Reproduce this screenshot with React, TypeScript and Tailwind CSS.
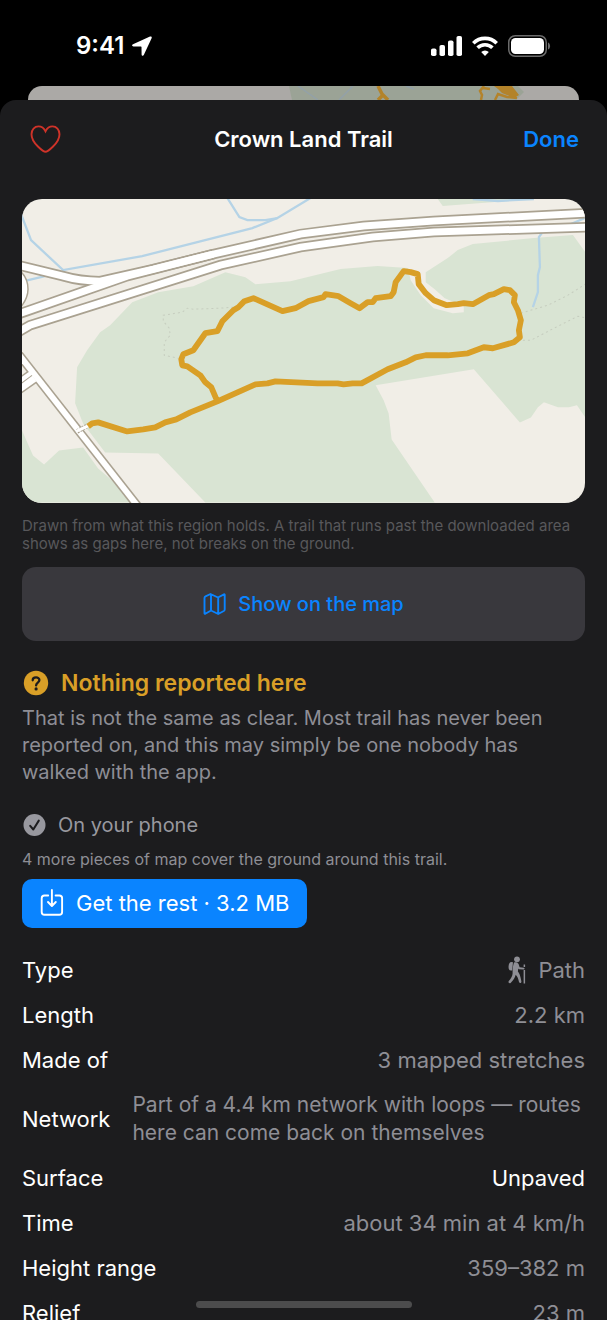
import type { ReactNode } from 'react'

const DETAILS: { label: string; value: string; strong?: boolean; hiker?: boolean; long?: boolean }[] = [
  { label: 'Type', value: 'Path', hiker: true },
  { label: 'Length', value: '2.2 km' },
  { label: 'Made of', value: '3 mapped stretches' },
  { label: 'Network', value: 'Part of a 4.4 km network with loops — routes here can come back on themselves', long: true },
  { label: 'Surface', value: 'Unpaved', strong: true },
  { label: 'Time', value: 'about 34 min at 4 km/h' },
  { label: 'Height range', value: '359–382 m' },
  { label: 'Relief', value: '23 m' },
]

const TRAIL =
  'M88 426 L92 423 L98 422 L127 431 L143 429 L155 427 L165 422 L176 419 L190 412 L217 401 L255 384 L267 383 L275 381 L317 383 L337 383 L343 384 L352 383 L361 383 L387 369 L405 362 L415 357 L425 355 L447 355 L467 353 L483 347 L492 348 L513 342 L519 337 L518 330 L520 320 L517 310 L513 302 L514 295 L509 290 L503 289 L493 294 L488 295 L472 304 L463 303 L457 304 L446 305 L433 300 L425 293 L418 284 L417 274 L410 272 L403 271 L395 282 L393 292 L390 296 L375 298 L372 302 L367 302 L359 308 L350 303 L338 296 L325 294 L323 297 L308 301 L295 308 L282 311 L253 298 L244 301 L238 307 L233 310 L222 321 L217 331 L205 333 L193 350 L183 354 L181 359 L182 365 L187 366 L200 375 L205 382 L211 387 L217 401'

const MOTORWAYS = [
  'M18 265 L63 276 Q80 281 100 281 L153 269 L213 254',
  'M18 314 L127 276 L213 254 L300 234 L363 226 L433 221 L588 213',
  'M18 332 L30 325 L220 265 L300 247 L372 237 L433 232 L588 227',
]

function TrailMap() {
  return (
    <svg viewBox="22 199 562 303" role="img" aria-label="Map of Crown Land Trail" className="block h-auto w-full rounded-[20px] bg-[#f1eee7]">
      {/* woodland */}
      <g fill="#d9e4d3">
        <path d="M87 350 L100 332 L110 325 L132 302 L158 292 L193 286 L225 272 L245 277 L255 284 L290 281 L340 269 L377 266 L407 268 L425 272 L447 258 L457 250 L472 244 L533 238 L572 235 L585 253 L585 418 L576 405 L568 407 L557 407 L543 402 L537 407 L530 417 L519 422 L473 369 L375 385 L383 400 L388 413 L391 439 L434 502 L205 502 L158 453 L105 452 L83 423 L75 403 L77 367 Z" />
        <path d="M22 430 L33 455 L44 464 L59 450 L83 447 L98 468 L112 480 L132 502 L22 502 Z" />
        <path d="M437 199 L442 206 L507 201 L533 199 Z" />
      </g>
      <path d="M407 266 L425 270 L425 282 L434 289 L444 298 L463 306 L463 312 L452 313 L433 308 L420 295 L410 280 Z" fill="#f1eee7" />

      {/* streams */}
      <g fill="none" stroke="#b5d3e6" strokeWidth="2.300">
        <path d="M21 214 L31 240 L63 270 L142 256 L252 228 L277 218 L310 198" />
        <path d="M227 198 L239 217 L247 220 L265 220 L277 218" />
        <path d="M24 281 L45 276" />
        <path d="M472 199 L497 201 L533 199" />
        <path d="M586 217 L570 224" />
        <path d="M541 233 L538 237 L539 267 L537 275 L537 292 L532 307" />
      </g>

      {/* footways */}
      <g fill="none" stroke="#c6cdbf" strokeWidth="1" strokeDasharray="2 3">
        <path d="M233 307 L220 308 L193 309 L187 308 L182 312 L163 315 L163 321 L169 328 L170 335 L164 342 L164 355 L178 358" />
        <path d="M520 313 L547 305 L567 295 L586 283" />
        <path d="M522 340 L530 340 L553 328 L577 316 L586 318" />
      </g>

      {/* roads: casing first, then the white fill */}
      <g fill="none" stroke="#aaa291">
        <path d="M16 268 Q28 275 28 289 Q28 298 20 308" fill="#ffffff" strokeWidth="1.500" />
        <path d="M16 388 L33 376" strokeWidth="15" />
        {MOTORWAYS.map((d) => <path key={d} d={d} strokeWidth="10.500" />)}
        <path d="M10 343 L141 510" strokeWidth="9" />
      </g>
      <g fill="none" stroke="#ffffff">
        <path d="M16 388 L33 376" strokeWidth="12" />
        {MOTORWAYS.map((d) => <path key={d} d={d} strokeWidth="7" />)}
        <path d="M10 343 L141 510" strokeWidth="5.800" />
      </g>
      <path d="M20 384 L32 375" stroke="#aaa291" strokeWidth="1" />
      <path d="M77 431 L88 425" stroke="#aaa291" strokeWidth="4.500" strokeDasharray="2 1" />
      <path d="M76 431 L89 425" stroke="#ffffff" strokeWidth="3" />

      <path d={TRAIL} fill="none" stroke="#d99f27" strokeWidth="5.800" strokeLinejoin="round" />
    </svg>
  )
}

function StatusBar() {
  return (
    <header className="flex h-[86px] items-center justify-between pl-[76px] pr-[56px] pt-[5px]">
      <div className="flex items-center gap-2 text-2xl font-semibold">
        <span>9:41</span>
        <svg viewBox="0 0 20 20" className="h-5 w-5" fill="currentColor" aria-hidden="true">
          <path d="M18 0.600 C19.300 0.100 20.100 1 19.600 2.200 L11.900 18.800 C11.300 20.200 9.600 20 9.600 18.500 L9.500 11.100 C9.500 10.700 9.300 10.500 8.900 10.500 L1.500 10.400 C-0.100 10.400 -0.400 8.800 1 8.200 Z" />
        </svg>
      </div>
      <div className="flex items-center gap-[10px]">
        <svg viewBox="0 0 31 20" className="h-5 w-[31px]" fill="currentColor" aria-hidden="true">
          <rect x="0" y="12.500" width="5.500" height="7.500" rx="1.800" />
          <rect x="8.500" y="9" width="5.500" height="11" rx="1.800" />
          <rect x="17" y="4.500" width="5.500" height="15.500" rx="1.800" />
          <rect x="25.500" y="0" width="5.500" height="20" rx="1.800" />
        </svg>
        <svg viewBox="0 0 26 20" className="h-5 w-[26px]" fill="none" stroke="currentColor" strokeWidth="3.600" aria-hidden="true">
          <path d="M1.300 7.200 A16.500 16.500 0 0 1 24.700 7.200" />
          <path d="M5.600 11.800 A10.500 10.500 0 0 1 20.400 11.800" />
          <path d="M13 20 L9.200 16.100 A5.400 5.400 0 0 1 16.800 16.100 Z" fill="currentColor" stroke="none" />
        </svg>
        <svg viewBox="0 0 43 22" className="h-[22px] w-[43px]" aria-hidden="true">
          <rect x="0.750" y="0.750" width="37.500" height="20.500" rx="6.500" fill="none" stroke="#6b6b6b" strokeWidth="1.500" />
          <rect x="3" y="3" width="33" height="16" rx="4.500" fill="currentColor" />
          <path d="M40 7.500 C42.800 8.500 42.800 13.500 40 14.500 Z" fill="#6b6b6b" />
        </svg>
      </div>
    </header>
  )
}

// Edge of the map screen that stays visible behind the sheet
function BackdropEdge() {
  return (
    <div className="mx-7 h-[14px] overflow-hidden rounded-t-[14px] bg-[#aba9a6]">
      <svg viewBox="0 0 551 14" className="block h-[14px] w-full" fill="none" aria-hidden="true">
        <path d="M261 0 L490 0 L496 6 L488 14 L264 14 Z" fill="#9ba396" />
        <path d="M270 0 L290 14 M311 14 L325 0 M378 0 L386 3" stroke="#93a1a8" strokeWidth="1.500" />
        <path d="M350 0 L355 10 M350 14 L355 9 L360 14" stroke="#b3832a" strokeWidth="3.500" />
        <path d="M456 0 L452 5 L454 9 L453 14 M455 2 L462 3" stroke="#b3832a" strokeWidth="2.500" />
        <path d="M466 0 L484 0 L491 9 L486 12 L474 7 L470 3 Z" fill="#b3832a" />
        <path d="M467 14 L470 8 L479 11 L489 12" stroke="#b3832a" strokeWidth="2.500" />
      </svg>
    </div>
  )
}

function SheetHeader() {
  return (
    <div className="grid h-[78px] grid-cols-[1fr_auto_1fr] items-center px-7 text-[22px] font-semibold">
      <button type="button" aria-label="Add to favourites" className="ml-[2px] justify-self-start text-[#cf3329]">
        <svg viewBox="0 0 31 28" className="h-7 w-[31px]" fill="none" stroke="currentColor" strokeWidth="1.900" aria-hidden="true">
          <path d="M15.500 26.800 C14 26.800 1.500 18.500 1.500 9.200 C1.500 4.500 4.600 1.400 8.500 1.400 C11.800 1.400 14 3.300 15.500 6.300 C17 3.300 19.200 1.400 22.500 1.400 C26.400 1.400 29.500 4.500 29.500 9.200 C29.500 18.500 17 26.800 15.500 26.800 Z" />
        </svg>
      </button>
      <h1>Crown Land Trail</h1>
      <button type="button" className="justify-self-end text-[#0a84ff]">Done</button>
    </div>
  )
}

function Hiker() {
  return (
    <svg viewBox="0 0 18 28" className="h-7 w-[18px]" fill="currentColor" aria-hidden="true">
      <circle cx="9" cy="3.300" r="2.900" />
      <path d="M3.500 6 C1.500 6 0.800 8 0.600 10 C0.400 12.500 0.900 14.500 3 14.500 L4.200 14.500 L5 6.300 Z" />
      <path d="M6 6.500 C9 5.500 10.500 7 11 9.300 L11.600 11.200 L15.800 11.700 C17 12 16.800 13.600 15.700 13.500 L10.800 13.200 L10.200 12.500 L9.900 15.500 C11.500 17.500 12.500 20 13.400 25.500 C13.400 27.500 11.500 27.500 11 26 C10.300 22.700 9.500 20.500 7.700 18.800 C7 21.800 5.700 24 2.600 26.900 C1.300 27.800 -0.200 26.500 0.800 25.100 C3 22.300 4.400 20.500 4.600 17.500 C4.500 13.500 4.900 9.500 6 6.500 Z" />
      <path d="M15.600 8.500 h1.500 v2.500 h-1.500 Z M15.600 14 h1.500 v13.500 h-1.500 Z" />
    </svg>
  )
}

function DetailRow({ label, className, children }: { label: string; className: string; children: ReactNode }) {
  return (
    <div className="flex items-center justify-between gap-[22px]">
      <dt className="shrink-0">{label}</dt>
      <dd className={className}>{children}</dd>
    </div>
  )
}

export default function App() {
  return (
    <div className="relative h-screen overflow-hidden bg-black font-[Inter,sans-serif] text-white">
      <StatusBar />
      <BackdropEdge />

      <main className="rounded-t-[16px] bg-[#1c1c1e] pb-10">
        <SheetHeader />

        <div className="px-[22px] pt-[21px]">
          <TrailMap />
          <p className="mt-[14px] text-[15px] leading-[18px] text-[#58585b]">
            Drawn from what this region holds. A trail that runs past the downloaded area shows as gaps here, not breaks on the ground.
          </p>

          <button type="button" className="mt-[14px] flex h-[74px] w-full items-center justify-center gap-3 rounded-[14px] bg-[#39383d] text-xl font-medium text-[#0a84ff]">
            <svg viewBox="0 0 23 22" className="h-[22px] w-[23px]" fill="none" stroke="currentColor" strokeWidth="1.900" strokeLinejoin="round" aria-hidden="true">
              <path d="M1.500 5 C1.500 4 1.700 3.700 2.500 3.300 L7.500 1 L15 4.500 L21 1.300 C21.500 1.100 21.700 1.300 21.700 2 L21.700 16.500 C21.700 17.300 21.500 17.600 20.800 18 L15.200 21 L8 17.500 L2.300 20.800 C1.800 21 1.500 20.800 1.500 20.200 Z M8 1.300 V17.500 M15.200 4.500 V21" />
            </svg>
            Show on the map
          </button>

          <section className="mt-7">
            <h2 className="flex items-center gap-3 text-[23px] font-semibold leading-7 text-[#d99f27]">
              <svg viewBox="0 0 27 26" className="h-[26px] w-[27px]" aria-hidden="true">
                <circle cx="14" cy="13" r="12.200" fill="currentColor" />
                <path d="M10.700 10.300 C10.700 6.500 17.400 6.500 17.400 10.100 C17.400 12.700 14.100 12.500 14.100 15.400" fill="none" stroke="#1c1c1e" strokeWidth="2.300" strokeLinecap="round" />
                <circle cx="14.100" cy="18.900" r="1.600" fill="#1c1c1e" />
              </svg>
              Nothing reported here
            </h2>
            <p className="mt-2 text-xl leading-[27px] text-[#8e8e95]">
              That is not the same as clear. Most trail has never been reported on, and this may simply be one nobody has walked with the app.
            </p>
          </section>

          <section className="mt-[25px]">
            <h2 className="flex items-center gap-3 text-xl leading-7 text-[#98989f]">
              <svg viewBox="0 0 24 24" className="h-6 w-6" aria-hidden="true">
                <circle cx="12.500" cy="12" r="11" fill="currentColor" />
                <path d="M8.200 12.800 L11.300 16.500 L16.800 7.600" fill="none" stroke="#1c1c1e" strokeWidth="2" strokeLinecap="round" strokeLinejoin="round" />
              </svg>
              On your phone
            </h2>
            <p className="mt-2 text-base leading-6 text-[#8e8e95]">4 more pieces of map cover the ground around this trail.</p>
            <button type="button" className="mt-2 flex h-[49px] items-center gap-3 rounded-[10px] bg-[#0a84ff] px-[18px] text-[22px]">
              <svg viewBox="0 0 24 30" className="h-[30px] w-6" fill="none" stroke="currentColor" strokeWidth="1.900" strokeLinecap="round" strokeLinejoin="round" aria-hidden="true">
                <path d="M8.200 7.500 H4.500 C2.700 7.500 1.700 8.500 1.700 10.300 V24 C1.700 25.800 2.700 26.800 4.500 26.800 H19.300 C21.100 26.800 22.100 25.800 22.100 24 V10.300 C22.100 8.500 21.100 7.500 19.300 7.500 H15.600 M11.900 2 V17.500 M8 14 L11.900 18 L15.800 14" />
              </svg>
              Get the rest · 3.2 MB
            </button>
          </section>

          <dl className="mt-7 flex flex-col gap-[17px] text-[22px] leading-7">
            {DETAILS.map((row) => (
              <DetailRow
                key={row.label}
                label={row.label}
                className={row.strong ? 'text-white' : row.long ? 'text-[21px] text-[#8e8e95]' : 'text-[#8e8e95]'}
              >
                {row.hiker ? <span className="flex items-center gap-3"><Hiker />{row.value}</span> : row.value}
              </DetailRow>
            ))}
          </dl>
        </div>
      </main>

      {/* home indicator */}
      <div className="absolute bottom-3 left-1/2 h-[7px] w-[216px] -translate-x-1/2 rounded-full bg-[#4c4c4d]" />
    </div>
  )
}
